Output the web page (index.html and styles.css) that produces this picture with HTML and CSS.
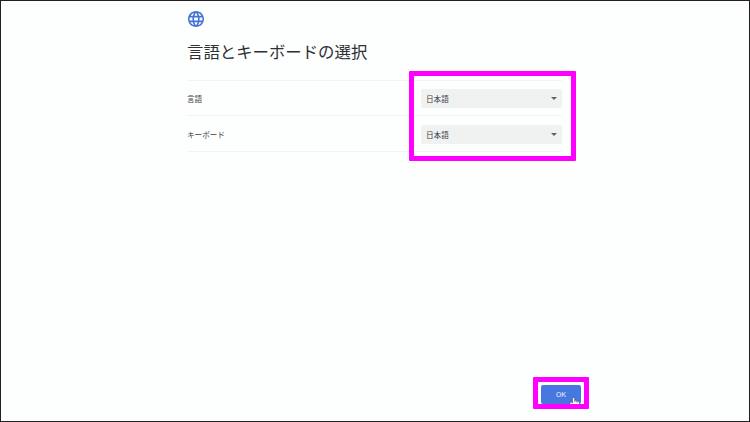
FILE: index.html
```html
<!DOCTYPE html>
<html lang="ja">
<head>
<meta charset="utf-8">
<title>言語とキーボードの選択</title>
<link rel="stylesheet" href="styles.css">
</head>
<body>
<main class="screen">
  <div class="content">
    <svg class="globe" viewBox="2 2 20 20" aria-hidden="true"><path d="M11.99 2C6.47 2 2 6.48 2 12s4.47 10 9.99 10C17.52 22 22 17.52 22 12S17.52 2 11.99 2zm6.93 6h-2.95c-.32-1.25-.78-2.45-1.38-3.56 1.84.63 3.37 1.91 4.33 3.56zM12 4.04c.83 1.2 1.48 2.53 1.91 3.96h-3.82c.43-1.43 1.08-2.76 1.91-3.96zM4.26 14C4.1 13.36 4 12.69 4 12s.1-1.36.26-2h3.38c-.08.66-.14 1.32-.14 2s.06 1.34.14 2H4.26zm.82 2h2.95c.32 1.25.78 2.45 1.38 3.56-1.84-.63-3.37-1.9-4.33-3.56zm2.95-8H5.08c.96-1.66 2.49-2.93 4.33-3.56C8.81 5.55 8.35 6.75 8.03 8zM12 19.96c-.83-1.2-1.48-2.53-1.91-3.96h3.82c-.43 1.43-1.08 2.76-1.91 3.96zM14.34 14H9.66c-.09-.66-.16-1.32-.16-2s.07-1.35.16-2h4.68c.09.65.16 1.32.16 2s-.07 1.34-.16 2zm.25 5.56c.6-1.11 1.06-2.31 1.38-3.56h2.95c-.96 1.65-2.49 2.93-4.33 3.56zM16.36 14c.08-.66.14-1.32.14-2s-.06-1.34-.14-2h3.38c.16.64.26 1.31.26 2s-.1 1.36-.26 2h-3.38z"/></svg>
    <h1 class="title">言語とキーボードの選択</h1>
    <div class="settings">
      <div class="row">
        <span class="label">言語</span>
        <div class="select"><span>日本語</span><i class="arrow"></i></div>
      </div>
      <div class="row row-keyboard">
        <span class="label">キーボード</span>
        <div class="select"><span>日本語</span><i class="arrow"></i></div>
      </div>
      <div class="highlight highlight-settings"></div>
    </div>
  </div>
  <footer class="footer">
    <div class="action">
      <button class="ok">OK</button>
      <svg class="cursor" viewBox="0 0 11 10" aria-hidden="true"><path d="M3 9.8.8 6.2Q.5 4.7 2 5l1.5 1V1.4Q3.6.5 4.6.5t1.1.9v2q1-.4 1.6.3 1-.3 1.5.5 1.5-.2 1.7.9v4.7z"/><path class="fingers" d="M5.7 3.4v1.8M7.3 3.8v1.7M8.8 4.2v1.5"/></svg>
      <div class="highlight highlight-ok"></div>
    </div>
  </footer>
</main>
</body>
</html>
```

FILE: styles.css
```css
* {
  box-sizing: border-box;
}

body {
  margin: 0;
  font-family: "Noto Sans CJK JP", sans-serif;
  color: #3c4043;
}

.screen {
  display: flex;
  flex-direction: column;
  justify-content: space-between;
  width: 750px;
  height: 422px;
  border: 1px solid #231f20;
  background: #fdfefe;
}

.content {
  width: 375px;
  margin-left: 186px;
  padding-top: 10px;
}

.globe {
  display: block;
  width: 16px;
  height: 16px;
  margin-left: 1px;
  fill: #4472d9;
}

.title {
  margin: 11px 0 0;
  font-size: 16.4px;
  font-weight: 400;
  line-height: 26px;
  white-space: nowrap;
  color: #2e3033;
}

.settings {
  position: relative;
  margin-top: 16px;
  border-top: 1px solid #f1f3f3;
}

.row {
  display: flex;
  align-items: center;
  justify-content: space-between;
  height: 35px;
  border-bottom: 1px solid #f1f3f3;
}

.row-keyboard {
  height: 36px;
  padding-top: 1px;
}

.label {
  font-size: 7.6px;
}

.select {
  display: flex;
  align-items: center;
  justify-content: space-between;
  width: 141px;
  height: 19px;
  padding: 0 5px;
  border-radius: 2px;
  background: #f0f2f2;
  font-size: 7.6px;
}

.arrow {
  border: 3px solid transparent;
  border-top-color: #5f6368;
  border-bottom: 0;
}

.highlight {
  position: absolute;
  border: 5px solid #ff00ff;
  border-radius: 1px;
}

.highlight-settings {
  top: -10px;
  left: 222px;
  width: 167px;
  height: 90px;
}

.footer {
  display: flex;
  padding: 0 0 17px 540px;
}

.action {
  position: relative;
}

.ok {
  display: block;
  width: 40px;
  height: 19px;
  padding: 0;
  border: 0;
  border-radius: 2px;
  background: #4778df;
  color: #e8effc;
  font: 400 7.6px Roboto, sans-serif;
}

.cursor {
  position: absolute;
  top: 12px;
  left: 28px;
  width: 11px;
  height: 10px;
  fill: #fff;
  stroke: #333c55;
  stroke-width: .55;
}

.fingers {
  fill: none;
}

.highlight-ok {
  top: -8px;
  left: -8px;
  width: 56px;
  height: 32px;
}
```
